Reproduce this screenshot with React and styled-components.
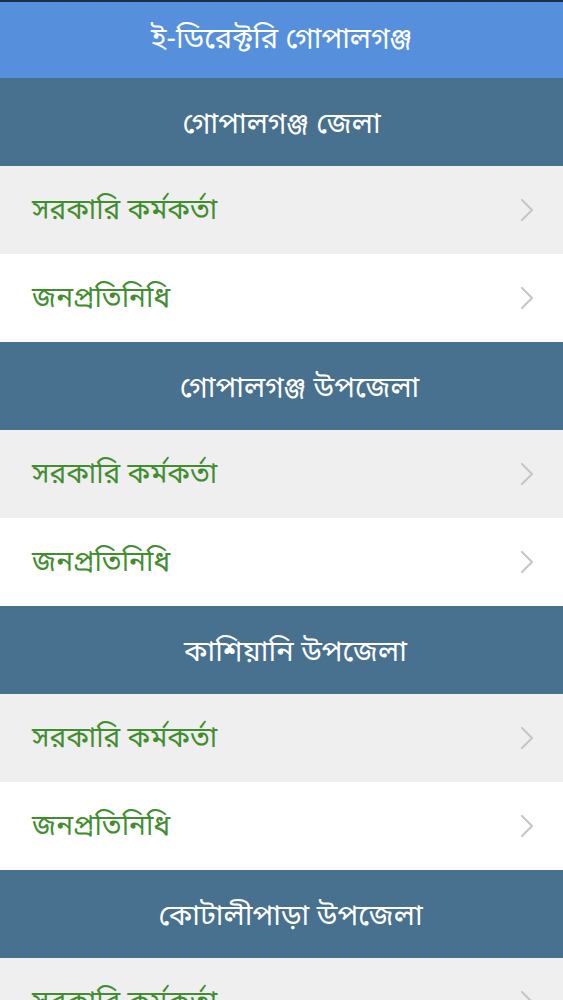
import React from 'react'
import styled, { createGlobalStyle } from 'styled-components'

const GlobalStyle = createGlobalStyle`
    html, body {
        margin: 0;
        padding: 0;
        background: #ffffff;
        font-family: "Noto Sans Bengali", "Noto Sans", "Lohit Bengali", sans-serif;
    }
`
const Screen = styled.div`
    width: 563px;
    height: 1000px;
    overflow: hidden;
    display: flex;
    flex-direction: column;
    border-top: 2px solid #1d2c4a;
    box-sizing: border-box;
`
const TopBar = styled.header`
    flex: 0 0 76px;
    background-color: #5690dc;
    color: #ffffff;
    display: flex;
    justify-content: center;
    align-items: center;
    font-size: 29px;
    font-weight: 400;
`
const Section = styled.div`
    flex: 0 0 88px;
    background-color: #48708f;
    color: #ffffff;
    display: flex;
    justify-content: center;
    align-items: center;
    font-size: 29px;
    padding-left: ${p => p.shift || 0}px;
    padding-top: 6px;
    box-sizing: border-box;
`
const Row = styled.div`
    flex: 0 0 88px;
    background-color: ${p => (p.shaded ? '#efefef' : '#ffffff')};
    display: flex;
    align-items: center;
    justify-content: space-between;
    padding: 0 28px 0 32px;
    box-sizing: border-box;
`
const Label = styled.span`
    color: #428d30;
    font-size: 28px;
    padding-top: 2px;
`
const Chevron = () => (
    <svg width="16" height="26" viewBox="0 0 16 26">
        <path d="M3 3 L13 13 L3 23" fill="none" stroke="#c6c6c6" strokeWidth="2.2" strokeLinecap="round" strokeLinejoin="round" />
    </svg>
)

const groups = [
    { title: 'গোপালগঞ্জ জেলা', shift: 0 },
    { title: 'গোপালগঞ্জ উপজেলা', shift: 36 },
    { title: 'কাশিয়ানি উপজেলা', shift: 28 },
    { title: 'কোটালীপাড়া উপজেলা', shift: 18 },
]
const items = ['সরকারি কর্মকর্তা', 'জনপ্রতিনিধি']

const App = () => {
    return (
        <Screen>
            <GlobalStyle />
            <TopBar>ই-ডিরেক্টরি গোপালগঞ্জ</TopBar>
            {groups.map(g => (
                <React.Fragment key={g.title}>
                    <Section shift={g.shift}>{g.title}</Section>
                    {items.map((it, i) => (
                        <Row key={it} shaded={i === 0}>
                            <Label>{it}</Label>
                            <Chevron />
                        </Row>
                    ))}
                </React.Fragment>
            ))}
        </Screen>
    )
}

export default App
